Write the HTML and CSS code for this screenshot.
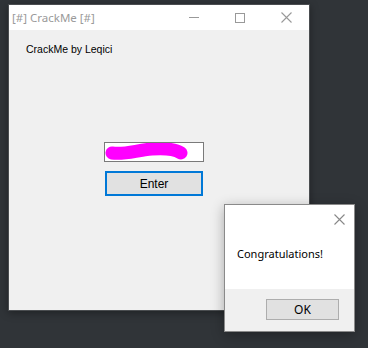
FILE: index.html
```html
<!DOCTYPE html>
<html>
<head>
<meta charset="utf-8">
<link rel="stylesheet" href="styles.css">
</head>
<body>
<div class="desktop">
  <div class="win main">
    <div class="titlebar">
      <span class="title">[#] CrackMe [#]</span>
      <div class="caps">
        <div class="cap"><svg width="10" height="10" viewBox="0 0 10 10"><rect x="0" y="4" width="10" height="1" fill="#999"/></svg></div>
        <div class="cap"><svg width="10" height="10" viewBox="0 0 10 10"><rect x="0.5" y="0.5" width="9" height="9" fill="none" stroke="#999" stroke-width="1"/></svg></div>
        <div class="cap"><svg width="11" height="11" viewBox="0 0 11 11"><path d="M0.5 0.5 L10.5 10.5 M10.5 0.5 L0.5 10.5" stroke="#999" stroke-width="1.1"/></svg></div>
      </div>
    </div>
    <div class="client">
      <div class="label">CrackMe by Leqici</div>
      <div class="textbox">
        <svg class="scribble" width="98" height="18" viewBox="0 0 98 18"><path d="M7,10 C20,12 32,7 47,6 S70,6 76,10" fill="none" stroke="#ff00ff" stroke-width="13" stroke-linecap="round"/></svg>
      </div>
      <div class="btn enter">Enter</div>
    </div>
  </div>
  <div class="win msg">
    <div class="msgtop">
      <div class="msgclose"><svg width="11" height="11" viewBox="0 0 11 11"><path d="M0.5 0.5 L10.5 10.5 M10.5 0.5 L0.5 10.5" stroke="#888" stroke-width="1.1"/></svg></div>
      <div class="msgtext">Congratulations!</div>
    </div>
    <div class="msgbottom">
      <div class="btn ok">OK</div>
    </div>
  </div>
</div>
</body>
</html>
```
FILE: styles.css
```css
html, body {
  margin: 0;
  padding: 0;
}
body {
  background: #303438;
  width: 368px;
  height: 348px;
  overflow: hidden;
}
.desktop {
  position: relative;
  width: 368px;
  height: 348px;
}
.win {
  position: absolute;
  box-sizing: border-box;
  display: flex;
  flex-direction: column;
}
.main {
  left: 8px;
  top: 4px;
  width: 302px;
  height: 307px;
  border: 1px solid #4a4d50;
  box-shadow: 0 2px 8px rgba(0,0,0,0.35);
}
.titlebar {
  height: 25px;
  background: #ffffff;
  display: flex;
  align-items: center;
  justify-content: space-between;
}
.title {
  font-family: "Noto Sans", "Open Sans", sans-serif;
  font-size: 11.5px;
  color: #9a9a9a;
  padding-left: 3px;
  margin-top: -1px;
}
.caps {
  display: flex;
  height: 100%;
}
.cap {
  width: 46px;
  display: flex;
  align-items: center;
  justify-content: center;
}
.client {
  flex: 1;
  background: #f0f0f0;
  display: flex;
  flex-direction: column;
  align-items: flex-start;
  font-family: "Liberation Sans", Arial, sans-serif;
  font-size: 11px;
  color: #000;
}
.label {
  margin-top: 13px;
  margin-left: 17px;
  line-height: 13px;
  font-size: 10.5px;
}
.textbox {
  position: relative;
  margin-top: 86px;
  margin-left: 95px;
  width: 100px;
  height: 20px;
  box-sizing: border-box;
  border: 1px solid #7a7a7a;
  background: #fff;
}
.scribble {
  position: absolute;
  left: 0;
  top: 0;
}
.btn {
  box-sizing: border-box;
  background: #e1e1e1;
  display: flex;
  align-items: center;
  justify-content: center;
}
.enter {
  margin-top: 9px;
  margin-left: 96px;
  width: 98px;
  height: 25px;
  border: 2px solid #0078d7;
  font-size: 12px;
}
.msg {
  left: 224px;
  top: 204px;
  width: 131px;
  height: 128px;
  border: 1px solid #8a8a8a;
  box-shadow: 0 3px 12px rgba(0,0,0,0.3);
  font-family: "Noto Sans", "Open Sans", sans-serif;
  font-size: 12px;
  color: #000;
}
.msgtop {
  background: #ffffff;
  height: 84px;
  display: flex;
  flex-direction: column;
}
.msgclose {
  align-self: flex-end;
  margin-top: 7px;
  margin-right: 9px;
  height: 11px;
}
.msgtext {
  margin-top: 23px;
  margin-left: 12px;
  line-height: 16px;
  font-size: 11px;
}
.msgbottom {
  flex: 1;
  background: #f0f0f0;
  display: flex;
  justify-content: flex-end;
  align-items: flex-start;
}
.ok {
  margin-top: 10px;
  margin-right: 15px;
  width: 73px;
  height: 21px;
  border: 1px solid #adadad;
}
```
